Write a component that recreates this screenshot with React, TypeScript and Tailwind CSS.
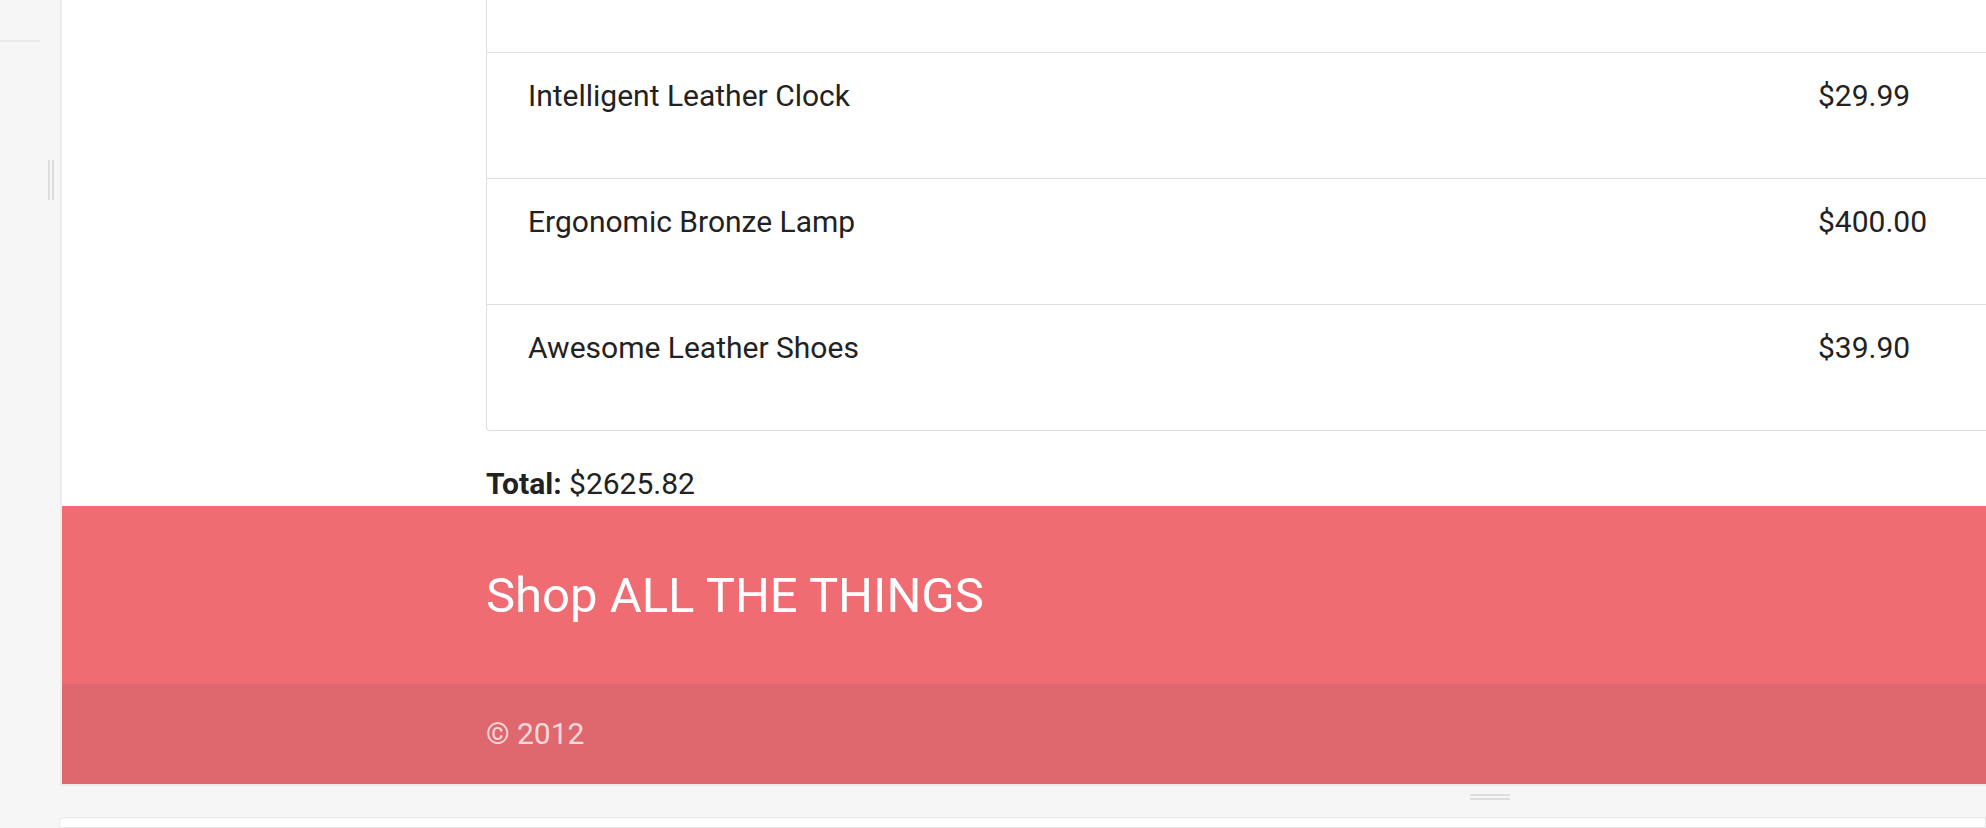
const items = [
  { name: "Intelligent Leather Clock", price: "$29.99" },
  { name: "Ergonomic Bronze Lamp", price: "$400.00" },
  { name: "Awesome Leather Shoes", price: "$39.90" },
];

const Row = ({ name, price }: { name: string; price: string }) => (
  <div className="flex h-[126px] border-t border-[#dedede] pt-[20px] pl-[41px]">
    <div className="w-[1290px]">{name}</div>
    <div>{price}</div>
  </div>
);

const App = () => {
  return (
    <div
      className="flex h-[828px] w-[1986px] overflow-hidden bg-[#f6f6f6] text-[#222222]"
      style={{ fontFamily: "Roboto, 'Liberation Sans', sans-serif" }}
    >
      <aside className="flex w-[60px] shrink-0 flex-col">
        <div className="mt-[40px] h-[2px] w-[40px] bg-[#ebebeb]" />
        <div className="ml-[48px] mt-[118px] flex gap-[2px]">
          <div className="h-[40px] w-[2px] bg-[#dddddd]" />
          <div className="h-[40px] w-[2px] bg-[#dddddd]" />
        </div>
      </aside>

      <div className="flex min-w-0 flex-1 flex-col">
        <main className="flex h-[784px] shrink-0 flex-col overflow-hidden border-l-2 border-[#ededed] bg-white text-[30px] leading-[45px]">
          <div className="pl-[424px]">
            <div className="w-[1700px] rounded-bl-[4px] border-b border-l border-[#dedede]">
              <div className="h-[52px]" />
              {items.map((it) => (
                <Row key={it.name} name={it.name} price={it.price} />
              ))}
            </div>
            <p className="mt-[30px]">
              <span className="font-bold">Total:</span> $2625.82
            </p>
          </div>

          <footer className="flex-1 bg-[#ee6c72] text-white">
            <div className="h-[178px] pl-[424px] pt-[62px]">
              <h2 className="text-[49px] leading-[56px]">Shop ALL THE THINGS</h2>
            </div>
            <div className="h-[100px] bg-[#df686e] pl-[424px] pt-[27px] text-white/75">
              © 2012
            </div>
          </footer>
        </main>

        <div className="h-[33px] shrink-0 border-t-2 border-[#ebebeb]">
          <div className="ml-[1410px] mt-[8px] flex w-[40px] flex-col gap-[2px]">
            <div className="h-[2px] bg-[#dddddd]" />
            <div className="h-[2px] bg-[#dddddd]" />
          </div>
        </div>

        <div className="-ml-px flex-1 rounded-tl-[5px] border border-[#e6e6e6] bg-white" />
      </div>
    </div>
  );
};

export default App;
